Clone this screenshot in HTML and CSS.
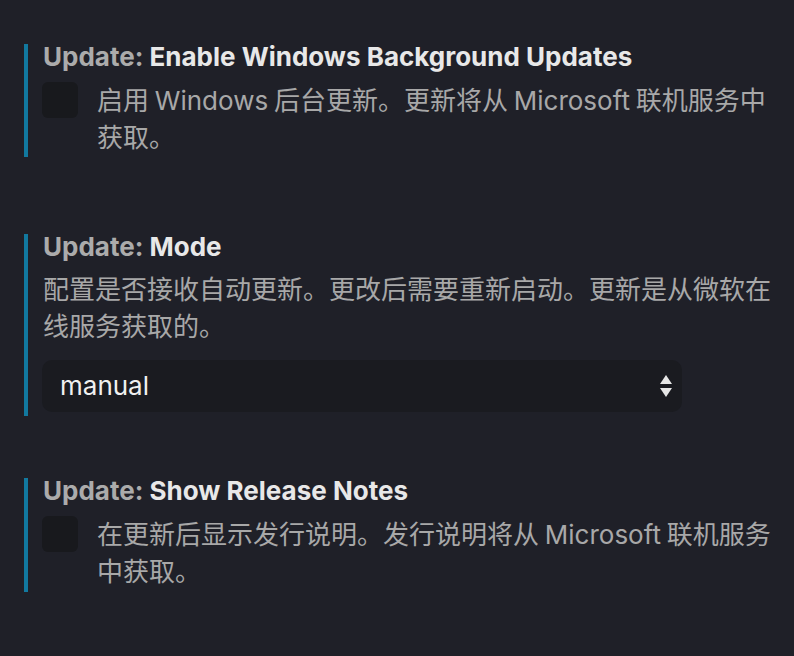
FILE: index.html
```html
<!DOCTYPE html>
<html lang="zh-CN">
<head>
<meta charset="utf-8">
<title>Update settings</title>
<link rel="stylesheet" href="styles.css">
</head>
<body>
<div class="list">
  <section class="setting setting-first">
    <div class="title"><span class="cat">Update: </span><span class="name">Enable Windows Background Updates</span></div>
    <div class="check-row">
      <span class="checkbox"></span>
      <div class="desc">启用 Windows 后台更新。更新将从 Microsoft 联机服务中获取。</div>
    </div>
  </section>

  <section class="setting setting-mode">
    <div class="title"><span class="cat">Update: </span><span class="name">Mode</span></div>
    <div class="desc desc-block">配置是否接收自动更新。更改后需要重新启动。更新是从微软在线服务获取的。</div>
    <div class="select">
      <span class="select-value">manual</span>
      <svg class="select-arrows" width="12" height="22" viewBox="0 0 12 22">
        <path d="M6 0 L12 9 L0 9 Z" fill="#e6e6e6"/>
        <path d="M0 13 L12 13 L6 22 Z" fill="#e6e6e6"/>
      </svg>
    </div>
  </section>

  <section class="setting setting-last">
    <div class="title"><span class="cat">Update: </span><span class="name">Show Release Notes</span></div>
    <div class="check-row">
      <span class="checkbox"></span>
      <div class="desc">在更新后显示发行说明。发行说明将从 Microsoft 联机服务中获取。</div>
    </div>
  </section>
</div>
</body>
</html>
```

FILE: styles.css
```css
html, body {
  margin: 0;
  padding: 0;
  background: #1f2028;
  height: 100%;
}

body {
  font-family: "Inter", "Noto Sans CJK SC", sans-serif;
  font-size: 26px;
}

.list {
  padding: 0 14px 0 24px;
  display: flex;
  flex-direction: column;
}

.setting {
  border-left: 4px solid #12799f;
  padding-left: 15px;
  display: flex;
  flex-direction: column;
}

.setting-first {
  margin-top: 44px;
  padding-bottom: 1px;
}

.setting-mode {
  margin-top: 77px;
  padding-bottom: 4px;
}

.setting-last {
  margin-top: 62px;
  padding-bottom: 2px;
}

.title {
  font-weight: 700;
  line-height: 26px;
  height: 26px;
  white-space: nowrap;
}

.cat {
  color: #ababab;
}

.name {
  color: #e8e8e8;
}

.desc {
  color: #a8a8a8;
  line-height: 37px;
  word-spacing: -1.5px;
}

.desc-block {
  margin-top: 11px;
}

.check-row {
  margin-top: 12px;
  display: flex;
  align-items: flex-start;
  gap: 19px;
  margin-left: -1px;
}

.checkbox {
  flex: 0 0 auto;
  width: 36px;
  height: 36px;
  border-radius: 6px;
  background: #18191d;
}

.select {
  margin-top: 15px;
  margin-left: -1px;
  width: 640px;
  height: 52px;
  box-sizing: border-box;
  border-radius: 10px;
  background: #1a1b20;
  display: flex;
  align-items: center;
  justify-content: space-between;
  padding: 0 10px 0 18px;
}

.select-value {
  color: #f0f0f0;
  font-size: 26px;
  line-height: 26px;
}

.select-arrows {
  display: block;
}
```
